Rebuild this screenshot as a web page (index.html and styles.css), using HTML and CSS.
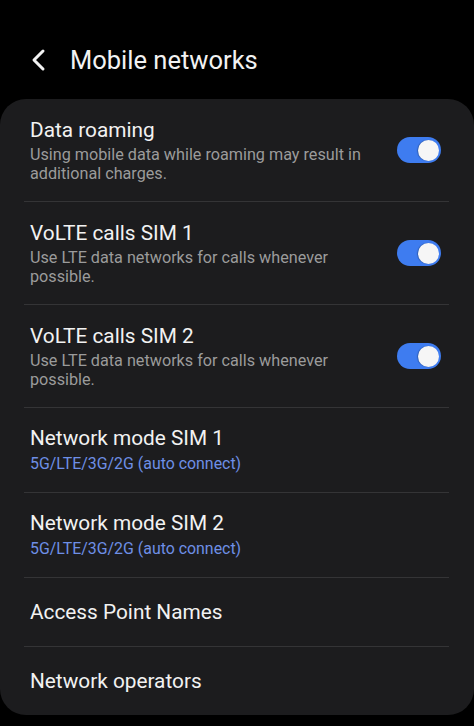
FILE: index.html
```html
<!doctype html>
<html>
    <head>
        <title>Mobile networks</title>
        <link rel="stylesheet" href="styles.css">
    </head>
    <body>
        <header class="topbar">
            <svg class="back" width="20" height="24" viewBox="0 0 20 24">
                <polyline points="14,3 5,12 14,21" fill="none" stroke="#f2f2f2" stroke-width="3" stroke-linecap="round" stroke-linejoin="round"/>
            </svg>
            <h1>Mobile networks</h1>
        </header>
        <ul class="card">
            <li class="row tall">
                <div class="text">
                    <p class="title">Data roaming</p>
                    <p class="sub">Using mobile data while roaming may result in additional charges.</p>
                </div>
                <span class="switch"><span class="thumb"></span></span>
            </li>
            <li class="row tall">
                <div class="text">
                    <p class="title">VoLTE calls SIM 1</p>
                    <p class="sub">Use LTE data networks for calls whenever possible.</p>
                </div>
                <span class="switch"><span class="thumb"></span></span>
            </li>
            <li class="row tall">
                <div class="text">
                    <p class="title">VoLTE calls SIM 2</p>
                    <p class="sub">Use LTE data networks for calls whenever possible.</p>
                </div>
                <span class="switch"><span class="thumb"></span></span>
            </li>
            <li class="row mid">
                <div class="text">
                    <p class="title">Network mode SIM 1</p>
                    <p class="value">5G/LTE/3G/2G (auto connect)</p>
                </div>
            </li>
            <li class="row mid">
                <div class="text">
                    <p class="title">Network mode SIM 2</p>
                    <p class="value">5G/LTE/3G/2G (auto connect)</p>
                </div>
            </li>
            <li class="row short">
                <div class="text">
                    <p class="title">Access Point Names</p>
                </div>
            </li>
            <li class="row last">
                <div class="text">
                    <p class="title">Network operators</p>
                </div>
            </li>
        </ul>
    </body>
</html>
```

FILE: styles.css
```css
* { margin: 0; padding: 0; box-sizing: border-box; }

body {
    background: #000;
    font-family: Roboto, 'Noto Sans', sans-serif;
    color: #f2f2f2;
    width: 474px;
    height: 726px;
    overflow: hidden;
}

.topbar {
    height: 99px;
    display: flex;
    align-items: center;
    padding: 20px 0 0 29px;
}

.topbar .back {
    margin-right: 21px;
}

.topbar h1 {
    font-size: 25.5px;
    font-weight: normal;
    line-height: 30px;
}

.card {
    list-style: none;
    background: #1c1c1e;
    border-radius: 26px;
    height: 616px;
}

.row {
    display: flex;
    align-items: center;
    justify-content: space-between;
    margin: 0 25px 0 24px;
    padding: 0 8px 0 6px;
    border-bottom: solid 1px #343436;
}

.row.tall { height: 103px; }
.row.mid { height: 85px; }
.row.short { height: 69px; }
.row.last { height: 68px; border-bottom: none; }

.title {
    font-size: 20.8px;
    line-height: 25px;
}

.sub {
    font-size: 16.2px;
    line-height: 19px;
    color: #9b9b9b;
    max-width: 345px;
    margin-top: 2px;
}

.value {
    font-size: 15.9px;
    line-height: 20px;
    color: #6e8fe6;
    margin-top: 3px;
}

.switch {
    width: 44px;
    height: 26px;
    border-radius: 13px;
    background: #3e7cf0;
    display: flex;
    align-items: center;
    justify-content: flex-end;
    padding: 0 2px;
    flex-shrink: 0;
}

.thumb {
    width: 21px;
    height: 21px;
    border-radius: 50%;
    background: #f6f6f6;
    box-shadow: -1px 0 1px rgba(0,0,0,.25);
}
```
